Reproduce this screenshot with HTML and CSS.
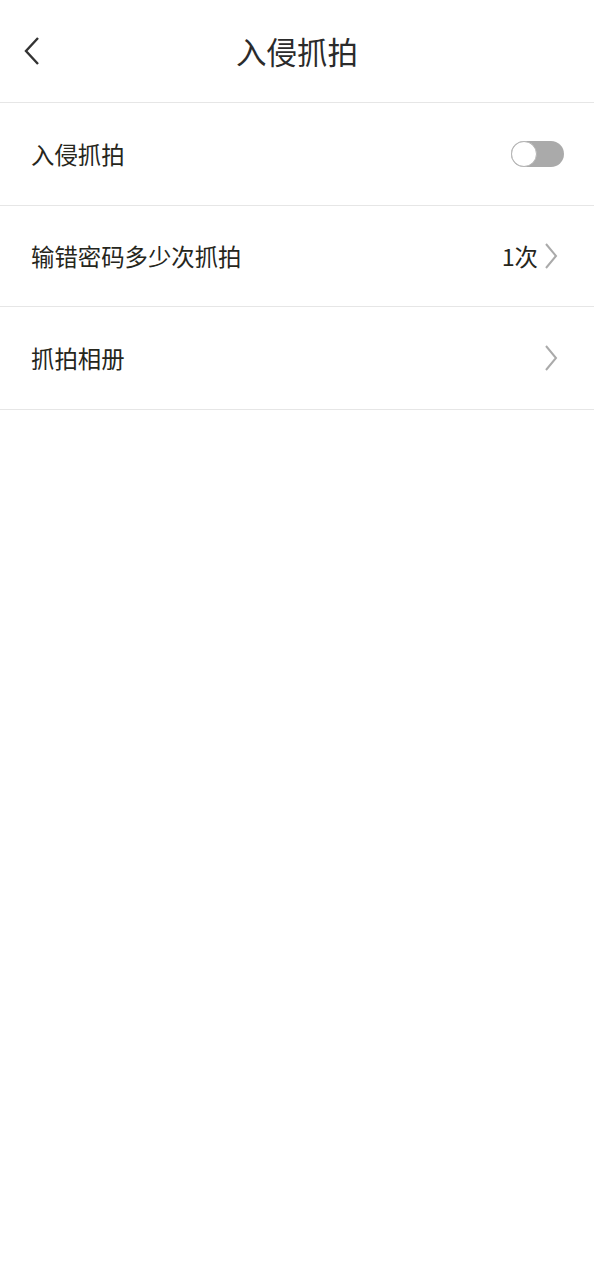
FILE: index.html
```html
<!DOCTYPE html>
<html lang="zh-CN">
<head>
    <meta charset="UTF-8">
    <meta name="viewport" content="width=device-width, initial-scale=1.0">
    <title>入侵抓拍</title>
    <link rel="stylesheet" href="styles.css">
</head>
<body>
    <div class="header">
        <span class="back">
            <svg width="20" height="30" viewBox="0 0 20 30">
                <polyline points="16,2 4,15 16,28" fill="none" stroke="#333" stroke-width="2.4" stroke-linejoin="miter"/>
            </svg>
        </span>
        <h1>入侵抓拍</h1>
    </div>

    <div class="list">
        <div class="row">
            <span class="label">入侵抓拍</span>
            <span class="switch"><span class="knob"></span></span>
        </div>
        <div class="row">
            <span class="label">输错密码多少次抓拍</span>
            <span class="extra">
                <span class="value">1次</span>
                <svg class="arrow" width="14" height="26" viewBox="0 0 14 26">
                    <polyline points="2,1 12,13 2,25" fill="none" stroke="#aaa" stroke-width="2"/>
                </svg>
            </span>
        </div>
        <div class="row">
            <span class="label">抓拍相册</span>
            <span class="extra">
                <svg class="arrow" width="14" height="26" viewBox="0 0 14 26">
                    <polyline points="2,1 12,13 2,25" fill="none" stroke="#aaa" stroke-width="2"/>
                </svg>
            </span>
        </div>
    </div>
</body>
</html>
```

FILE: styles.css
```css
body {
    font-family: "Noto Sans CJK SC", "Noto Sans", sans-serif;
    background-color: #fff;
    margin: 0;
    padding: 0;
}
.header {
    height: 102px;
    border-bottom: 1px solid #e6e6e6;
    display: flex;
    align-items: center;
    justify-content: center;
    position: relative;
}
.back {
    position: absolute;
    left: 22px;
    top: 36px;
    display: flex;
}
h1 {
    margin: 0;
    font-size: 30.5px;
    font-weight: 400;
    color: #2b2b2b;
}
.row {
    height: 101px;
    border-bottom: 1px solid #e6e6e6;
    display: flex;
    align-items: center;
    justify-content: space-between;
    padding: 0 30px 0 31px;
}
.row:first-child,
.row:last-child {
    height: 102px;
}
.row:nth-child(2) {
    height: 100px;
}
.label {
    font-size: 23.4px;
    color: #26261c;
}
.extra {
    display: flex;
    align-items: center;
    gap: 6px;
    margin-right: 6px;
}
.value {
    font-size: 23.4px;
    color: #26261c;
}
.arrow {
    display: block;
}
.switch {
    width: 53px;
    height: 26px;
    border-radius: 13px;
    background-color: #aaaaaa;
    display: flex;
    align-items: center;
}
.knob {
    width: 24px;
    height: 24px;
    border-radius: 50%;
    background-color: #fff;
    border: 1px solid #b5b5b5;
    box-sizing: content-box;
}
```
